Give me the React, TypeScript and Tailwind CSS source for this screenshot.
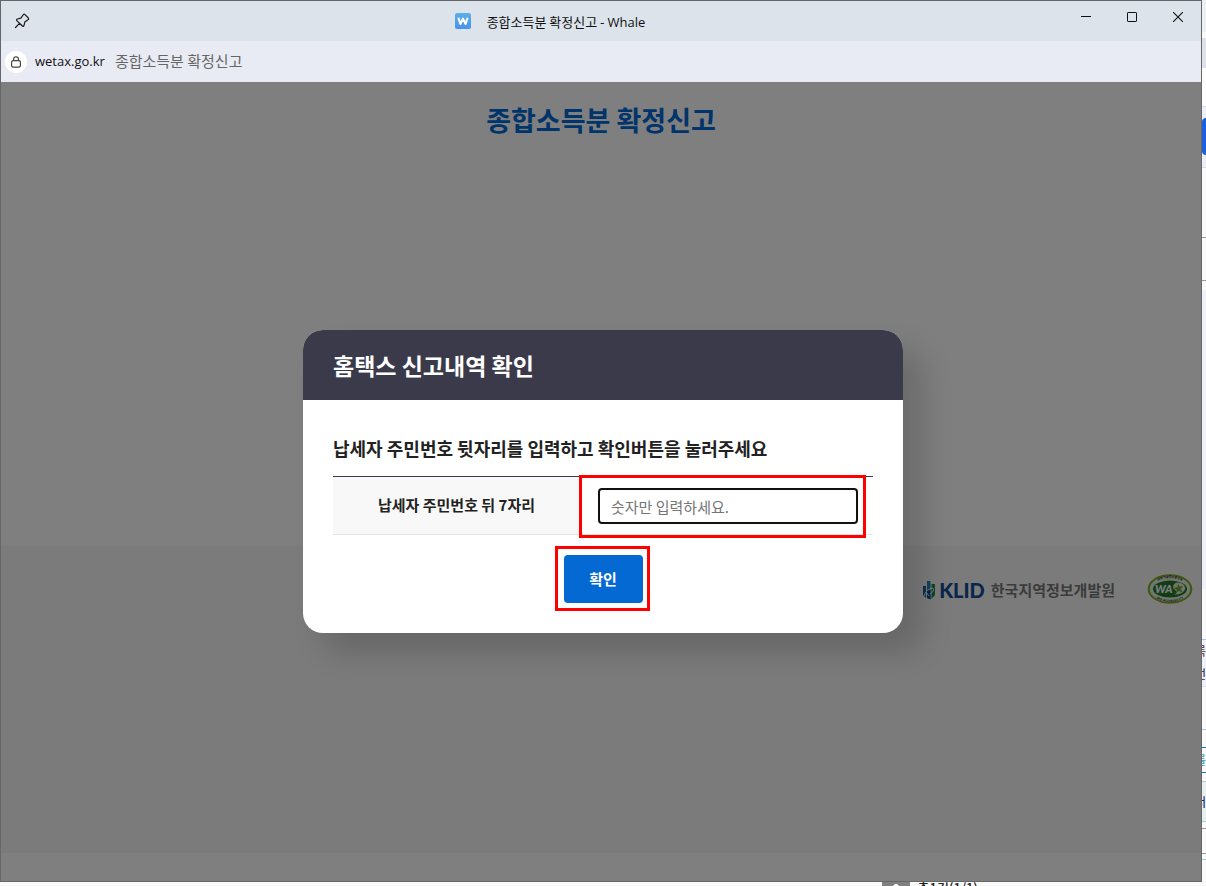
import { useState } from 'react'

type Strip = {
  className: string
  text?: string
}

// 팝업 창 오른쪽으로 살짝 보이는 뒤쪽 페이지
const strips: Strip[] = [
  { className: 'h-8 bg-[#efefef]' },
  { className: 'h-1.5 bg-[#fafafa]' },
  { className: 'h-[30px] bg-[#dfe1e9]' },
  { className: 'h-[38px] bg-[#fdfdfd]' },
  { className: 'h-3 border-t border-[#dcdce0] bg-[#eef0f8]' },
  { className: 'h-[37px] rounded-l-sm bg-[#1d5fdc]' },
  { className: 'h-3 bg-[#eef0f8]' },
  { className: 'h-[70px] border-t border-[#dcdce0] bg-[#fafafa]' },
  { className: 'h-[43px] border-t border-[#999] bg-[#fafafa]' },
  { className: 'h-2.5 border-t border-[#999] bg-[#fafafa]' },
  { className: 'h-[299px] bg-[#f1f1f9]' },
  { className: 'h-[50px] bg-[#fafafa]' },
  { className: 'h-[23px] border-t border-[#b9c1e2] bg-[#f1f1f9] text-[#4a2a2a]', text: '록' },
  { className: 'h-6 bg-[#f1f1f9] text-[#16204a]', text: '번' },
  { className: 'h-[43px] border-t border-[#dedeee] bg-[#fafafa]' },
  { className: 'h-[18px] border-t border-[#b9c1e2] bg-[#fafafa]' },
  { className: 'h-[25px] border-t border-[#0d8490] bg-[#fafafa] text-[#3a9aa8]', text: '를' },
  { className: 'h-[9px] border-t border-[#0d8490] bg-[#fafafa]' },
  { className: 'h-10 border-t border-[#b0ccc8] bg-[#e7f0ef] text-[#00006a]', text: '서' },
  { className: 'h-[7px] border-t border-[#b0ccc8] bg-[#fafafa]' },
  { className: 'h-[25px] border-t border-[#999] bg-[#fafafa]' },
  { className: 'h-1.5 border-t border-[#999] bg-[#fafafa]' },
  { className: 'flex-1 border-t border-[#a9c8d2] bg-[#fafafa]' },
]

function TitleBar() {
  return (
    <header className="flex h-10 items-start bg-[#dce3ea]">
      <button type="button" aria-label="고정" className="flex h-10 w-9 items-center justify-center pl-1.5 text-[#1b1b1b]">
        <svg width="16" height="16" viewBox="0 0 16 16" fill="none" stroke="currentColor" strokeWidth="1.2" strokeLinejoin="round" strokeLinecap="round">
          <path d="M9.5 1.5 Q10.2 .9 11 1.6 L14.4 5 Q15 5.8 14.3 6.5 L10.8 9.1 L10 12.6 Q9.4 14 8.4 13 L2.8 7.6 Q2 6.6 3.4 6 L6.9 5.1 Z M5.5 10.4 L1.5 14.5" />
        </svg>
      </button>
      <div className="flex h-10 min-w-0 flex-1 items-center justify-center gap-4">
        <svg width="16" height="16" viewBox="0 0 16 16">
          <defs>
            <linearGradient id="fav" x1="0" y1="0" x2="0" y2="1">
              <stop offset="0" stopColor="#5aafe8" />
              <stop offset="1" stopColor="#4a92ee" />
            </linearGradient>
          </defs>
          <rect width="16" height="16" rx="2" fill="url(#fav)" />
          <path d="M3.4 4.8 L5.4 11 L8 5.6 L10.6 11 L12.6 4.8" fill="none" stroke="#fff" strokeWidth="2.1" strokeLinejoin="round" />
        </svg>
        <h1 className="truncate pt-0.5 text-[13px] leading-5 text-[#111]">
          종합소득분 확정신고 - <span className="font-['Open_Sans']">Whale</span>
        </h1>
      </div>
      <div className="flex h-8 text-[#111]">
        <button type="button" aria-label="최소화" className="flex w-[46px] items-center justify-center">
          <svg width="10" height="10" viewBox="0 0 10 10" stroke="currentColor" shapeRendering="crispEdges">
            <path d="M0 4.5H10" />
          </svg>
        </button>
        <button type="button" aria-label="최대화" className="flex w-[46px] items-center justify-center">
          <svg width="10" height="10" viewBox="0 0 10 10" fill="none" stroke="currentColor">
            <rect x=".5" y=".5" width="9" height="9" rx=".6" />
          </svg>
        </button>
        <button type="button" aria-label="닫기" className="flex w-[46px] items-center justify-center">
          <svg width="10" height="10" viewBox="0 0 10 10" stroke="currentColor" strokeWidth="1.1">
            <path d="M0 0 L10 10 M10 0 L0 10" />
          </svg>
        </button>
      </div>
    </header>
  )
}

function AddressBar() {
  return (
    <div className="flex h-[41px] items-center bg-[#e8ebf4] pl-1">
      <span className="flex size-[22px] items-center justify-center rounded-full bg-white text-[#444]">
        <svg width="12" height="12" viewBox="0 0 12 12" fill="none" stroke="currentColor" strokeWidth="1.2">
          <rect x="1.6" y="4.6" width="8.8" height="6.6" rx="1.4" />
          <path d="M3.6 4.6 V3 Q3.6 .8 6 .8 T8.4 3 V4.6" />
        </svg>
      </span>
      <span className="ml-2 font-['Open_Sans'] text-[13px] text-[#111]">wetax.go.kr</span>
      <span className="ml-2.5 text-[15px] text-[#666]">종합소득분 확정신고</span>
    </div>
  )
}

function PageFooter() {
  return (
    <footer className="flex h-[307px] items-start justify-end bg-[#f6f6f6] pt-[26px] pr-2">
      <div className="flex h-9 items-center">
        <svg width="14" height="20" viewBox="0 0 14 20">
          <path d="M0 6H3V18L0 15Z" fill="#1c5a9c" />
          <path d="M4 1H7.5V19L4 18Z" fill="#2186b4" />
          <path d="M8.5 4H12V15L8.5 19Z" fill="#1b8f4b" />
          <path d="M4 10H7.5V19.5L4 18Z" fill="#134b8e" />
          <path d="M1 16 Q3 9 10 8 Q12 11 7 14 M3 12 L6 16" fill="none" stroke="#e8eef2" strokeWidth="1" />
        </svg>
        <span className="ml-0.5 font-['Lato'] text-[20px] leading-6 font-black text-[#124c96]">KLID</span>
        <span className="ml-1.5 text-[15px] leading-6 font-bold text-[#777]">한국지역정보개발원</span>
      </div>
      <svg className="ml-8" width="46" height="34" viewBox="0 0 46 34">
        <defs>
          <path id="arcTop" d="M5.5 17 A17.5 11 0 0 1 40.5 17" />
          <path id="arcBottom" d="M4 17 A19 13 0 0 0 42 17" />
        </defs>
        <ellipse cx="23" cy="17" rx="21.3" ry="13.8" fill="#e4eedb" stroke="#7eae2a" strokeWidth="2" />
        <ellipse cx="23" cy="17" rx="17" ry="8.6" fill="#237a2c" />
        <path d="M26 16 Q26 10 32 10.5 Q39 12 38 17.5 Q35 23 27 22.5 Q32 21 28 18 Z" fill="#dfeccf" />
        <path d="M31 11.5 L32.2 14.5 L36 14 L33.6 17 L36 20.5 L32 19 L28 21.5 L30 18 L26.5 16 L30.5 15 Z" fill="#64a436" />
        <text x="8" y="21" fill="#fff" fontFamily="Lato" fontStyle="italic" fontWeight="900" fontSize="11">WA</text>
        <text fill="#333" fontFamily="Noto Sans CJK KR" fontWeight="700" fontSize="3">
          <textPath href="#arcTop" startOffset="50%" textAnchor="middle">과학기술정보통신부</textPath>
        </text>
        <text fill="#333" fontFamily="Roboto" fontWeight="700" fontSize="3">
          <textPath href="#arcBottom" startOffset="50%" textAnchor="middle">WEB ACCESSIBILITY</textPath>
        </text>
      </svg>
    </footer>
  )
}

function ConfirmDialog() {
  const [value, setValue] = useState('')

  return (
    <form
      role="dialog"
      aria-labelledby="dialog-title"
      onSubmit={e => e.preventDefault()}
      className="w-full max-w-[600px] rounded-[20px] bg-white shadow-[20px_20px_30px_rgba(0,0,0,0.16)]"
    >
      <div className="flex h-[70px] items-center rounded-t-[20px] bg-[#3a3a4a] px-[30px]">
        <h2 id="dialog-title" className="text-[23px] font-bold text-white">홈택스 신고내역 확인</h2>
      </div>
      <div className="px-[30px] pt-9 pb-[30px]">
        <p className="mb-4 text-[18px] leading-6 font-bold text-[#222]">
          납세자 주민번호 뒷자리를 입력하고 확인버튼을 눌러주세요
        </p>
        <table className="w-full border-t border-b border-t-[#3a3a4a] border-b-[#e4e4e4]">
          <tbody>
            <tr>
              <th scope="row" className="w-[247px] bg-[#f8f8f8] text-[15px] font-bold text-[#222]">
                <label htmlFor="rrn">납세자 주민번호 뒤 7자리</label>
              </th>
              <td className="relative pt-[11px] pr-[15px] pb-2.5 pl-[18px]">
                <input
                  id="rrn"
                  type="text"
                  inputMode="numeric"
                  maxLength={7}
                  value={value}
                  onChange={e => setValue(e.target.value.replace(/\D/g, ''))}
                  placeholder="숫자만 입력하세요."
                  className="block h-9 w-full rounded border-2 border-[#111] bg-white px-[11px] text-[15px] text-[#222] outline-none placeholder:text-[#757575]"
                />
                <span className="pointer-events-none absolute -top-0.5 right-[7px] -bottom-1 -left-px border-3 border-[#f00]" />
              </td>
            </tr>
          </tbody>
        </table>
        <div className="mt-5 flex justify-center">
          <div className="relative">
            <button type="submit" className="block h-12 w-[79px] rounded bg-[#0569d3] text-[15px] font-bold text-white">
              확인
            </button>
            <span className="pointer-events-none absolute -top-[9px] -right-[7px] -bottom-2 -left-[9px] border-3 border-[#f00]" />
          </div>
        </div>
      </div>
    </form>
  )
}

export default function App() {
  return (
    <div className="flex min-h-screen flex-col bg-[#fafafa] font-['Noto_Sans_CJK_KR',sans-serif]">
      <div className="flex flex-1">
        <div className="flex min-w-0 flex-1 flex-col border border-[#66676b]">
          <TitleBar />
          <AddressBar />
          <main className="relative flex flex-1 flex-col bg-white">
            <div className="flex-1 pt-[18px]">
              <h2 className="text-center text-[27px] leading-10 font-bold text-[#0069d4]">종합소득분 확정신고</h2>
            </div>
            <PageFooter />
            <div className="h-7" />
            <div className="absolute inset-0 flex items-center justify-center bg-black/50 pl-1">
              <ConfirmDialog />
            </div>
          </main>
        </div>
        <aside className="flex w-1 flex-col overflow-hidden">
          {strips.map((strip, i) => (
            <div key={i} className={`flex shrink-0 items-center justify-end overflow-hidden text-[12px] ${strip.className}`}>
              {strip.text}
            </div>
          ))}
        </aside>
      </div>
      <div className="flex h-1 justify-end overflow-hidden pr-[228px]">
        <span className="mr-2 flex w-7 justify-center bg-[#808080] pt-0.5">
          <span className="h-2 w-1.5 rounded-t-full bg-white" />
        </span>
        <span className="text-[13px] leading-3 font-medium text-[#222]">총1건(1/1)</span>
      </div>
    </div>
  )
}
